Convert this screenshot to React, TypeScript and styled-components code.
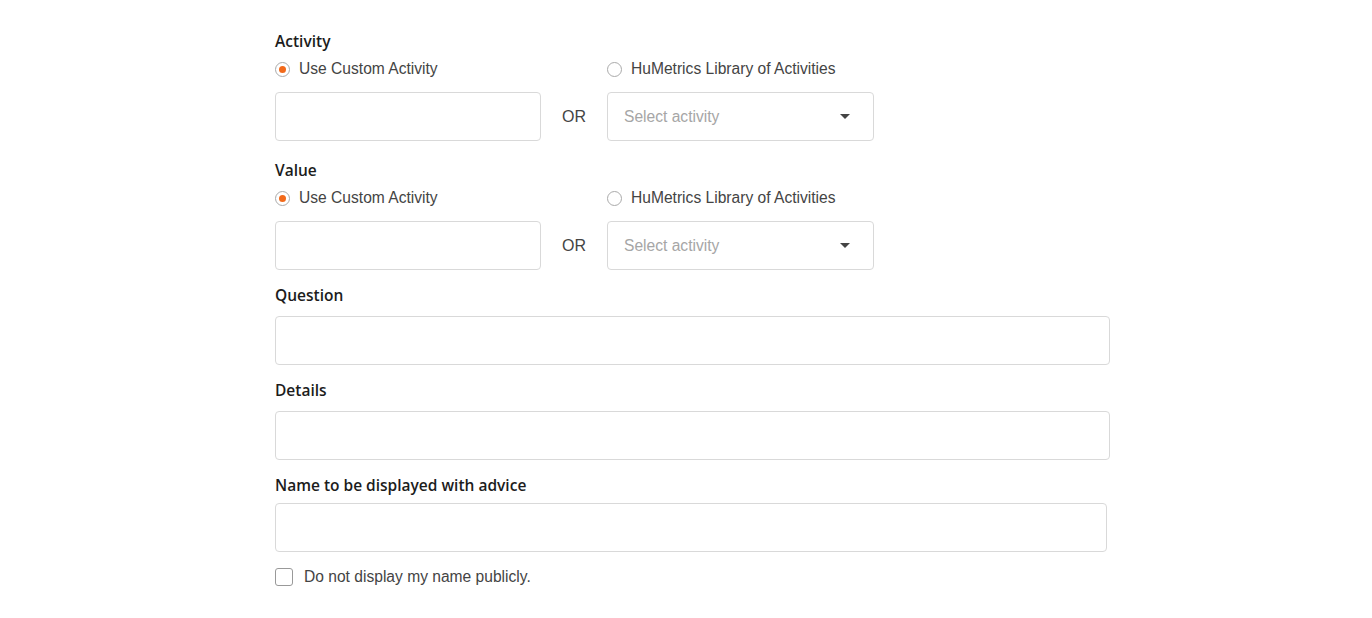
import React from 'react';
import styled, { createGlobalStyle } from 'styled-components';

const GlobalStyle = createGlobalStyle`
  body {
    margin: 0;
    background: #ffffff;
    font-family: "Liberation Sans", Arial, sans-serif;
  }
`;

const Page = styled.div`
  padding: 31px 0 0 275px;
  width: 835px;
`;

const Section = styled.div<{ $gap?: number }>`
  display: flex;
  flex-direction: column;
  margin-bottom: ${p => p.$gap ?? 15}px;
`;

const Label = styled.div<{ $gap?: number }>`
  font-family: "Open Sans", sans-serif;
  font-weight: 600;
  font-size: 15.5px;
  line-height: 20px;
  color: #1c1c1c;
  margin-bottom: ${p => p.$gap ?? 11}px;
`;

const ChoiceGrid = styled.div`
  display: grid;
  grid-template-columns: 266px 66px 267px;
  align-items: center;
`;

const RadioRow = styled(ChoiceGrid)`
  margin-bottom: 12px;
`;

const RadioOption = styled.label<{ $col: number }>`
  grid-column: ${p => p.$col};
  display: flex;
  align-items: center;
  gap: 9px;
  height: 22px;
  font-size: 15.6px;
  color: #444;
`;

const RadioCircle = styled.span<{ $checked?: boolean }>`
  width: 15px;
  height: 15px;
  box-sizing: border-box;
  border: 1px solid #aaa;
  border-radius: 50%;
  display: flex;
  align-items: center;
  justify-content: center;
  &::after {
    content: '';
    width: 7px;
    height: 7px;
    border-radius: 50%;
    background: ${p => (p.$checked ? '#f26a1b' : 'transparent')};
  }
`;

const TextBox = styled.div<{ $width?: number }>`
  box-sizing: border-box;
  width: ${p => (p.$width ? `${p.$width}px` : '100%')};
  height: 49px;
  border: 1px solid #d9d9d9;
  border-radius: 4px;
  background: #fff;
`;

const Or = styled.div`
  text-align: center;
  font-size: 16px;
  color: #444;
`;

const Select = styled.div`
  box-sizing: border-box;
  height: 49px;
  border: 1px solid #d9d9d9;
  border-radius: 4px;
  display: flex;
  align-items: center;
  justify-content: space-between;
  padding: 0 23px 0 16px;
  font-size: 15.6px;
  color: #a6a6a6;
`;

const Caret = styled.span`
  width: 0;
  height: 0;
  border-left: 5px solid transparent;
  border-right: 5px solid transparent;
  border-top: 5px solid #444;
`;

const CheckRow = styled.label`
  display: flex;
  align-items: center;
  gap: 11px;
  margin-top: 16px;
  font-size: 15.6px;
  color: #444;
`;

const CheckBox = styled.span`
  width: 18px;
  height: 18px;
  box-sizing: border-box;
  border: 1px solid #999;
  border-radius: 3px;
`;

function ChoiceField({ title, gap }: { title: string; gap?: number }) {
  return (
    <Section $gap={gap}>
      <Label $gap={7}>{title}</Label>
      <RadioRow>
        <RadioOption $col={1}>
          <RadioCircle $checked />
          Use Custom Activity
        </RadioOption>
        <RadioOption $col={3}>
          <RadioCircle />
          HuMetrics Library of Activities
        </RadioOption>
      </RadioRow>
      <ChoiceGrid>
        <TextBox />
        <Or>OR</Or>
        <Select>
          Select activity
          <Caret />
        </Select>
      </ChoiceGrid>
    </Section>
  );
}

export default function App() {
  return (
    <>
      <GlobalStyle />
      <Page>
        <ChoiceField title="Activity" gap={19} />
        <ChoiceField title="Value" gap={15} />
        <Section>
          <Label>Question</Label>
          <TextBox />
        </Section>
        <Section>
          <Label>Details</Label>
          <TextBox />
        </Section>
        <Section $gap={0}>
          <Label $gap={8}>Name to be displayed with advice</Label>
          <TextBox $width={832} />
          <CheckRow>
            <CheckBox />
            Do not display my name publicly.
          </CheckRow>
        </Section>
      </Page>
    </>
  );
}
